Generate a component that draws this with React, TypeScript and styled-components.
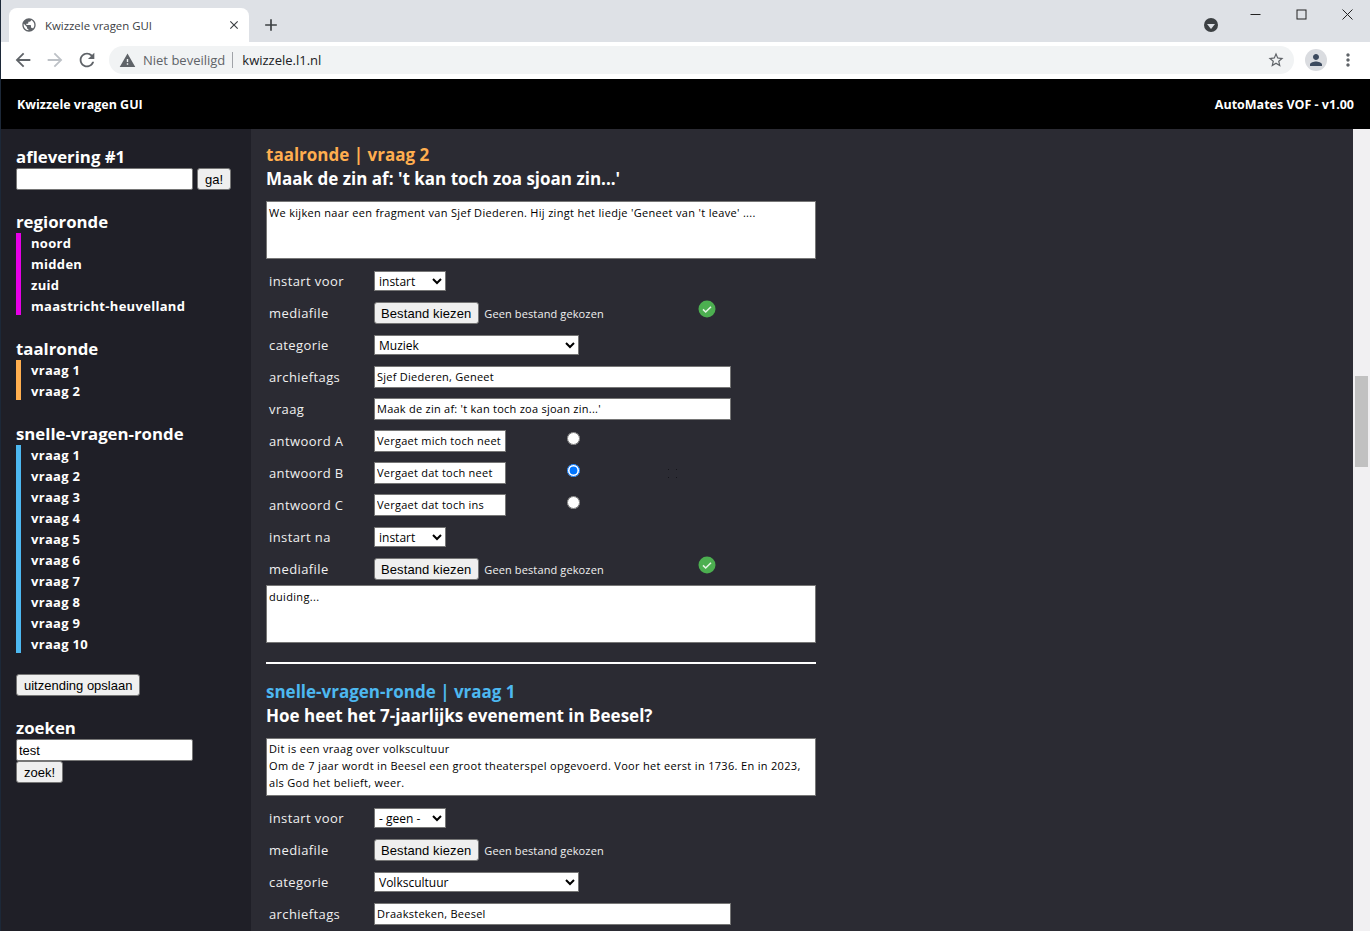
import { createGlobalStyle, styled } from "styled-components";
import {
  MdAdd,
  MdArrowBack,
  MdArrowForward,
  MdClose,
  MdMoreVert,
  MdPerson,
  MdPublic,
  MdRefresh,
  MdStarBorder,
  MdWarning,
} from "react-icons/md";

const SITE_FONT = `"Open Sans", "Noto Sans", sans-serif`;
const CTRL_FONT = `"Liberation Sans", Arial, sans-serif`;

const GlobalStyle = createGlobalStyle`
  html, body {
    margin: 0;
    padding: 0;
    height: 100%;
    overflow: hidden;
    background: #000;
  }
  * { box-sizing: border-box; }
`;

const Page = styled.div`
  position: relative;
  width: 1370px;
  height: 931px;
  display: flex;
  flex-direction: column;
  overflow: hidden;
  font-family: ${SITE_FONT};

  /* the window's own edge */
  &::after {
    content: "";
    position: absolute;
    top: 0;
    bottom: 0;
    left: 0;
    width: 1px;
    background: #1c2838;
  }
`;

const TabStrip = styled.div`
  height: 42px;
  flex: none;
  background: #dee1e6;
  display: flex;
  align-items: flex-end;
  padding-left: 9px;
  color: #3c4043;
`;

const Tab = styled.div`
  width: 240px;
  height: 34px;
  background: #fff;
  border-radius: 8px 8px 0 0;
  display: flex;
  align-items: center;
  padding: 0 8px 0 12px;
  font-size: 11.4px;
  color: #3c4043;

  span {
    flex: 1;
    margin-left: 8px;
  }
`;

const NewTab = styled.div`
  margin: 0 0 5px 12px;
  height: 24px;
  display: flex;
  align-items: center;
`;

const StripRight = styled.div`
  margin-left: auto;
  height: 42px;
  display: flex;
  align-items: flex-start;
`;

const MediaBadge = styled.div`
  width: 14px;
  height: 14px;
  margin: 18px 14px 0 0;
  border-radius: 50%;
  background: #3c4043;
  display: flex;
  align-items: center;
  justify-content: center;

  &::after {
    content: "";
    margin-top: 2px;
    border-left: 4px solid transparent;
    border-right: 4px solid transparent;
    border-top: 5px solid #dee1e6;
  }
`;

const WinButton = styled.div`
  width: 46px;
  height: 28px;
  display: flex;
  align-items: center;
  justify-content: center;
`;

const Toolbar = styled.div`
  height: 37px;
  flex: none;
  background: #fff;
  display: flex;
  align-items: center;
  padding: 0 0 1px 12px;
  color: #5f6368;
`;

const NavIcon = styled.div<{ $dim?: boolean }>`
  width: 32px;
  display: flex;
  color: ${(p) => (p.$dim ? "#bdc1c6" : "#5f6368")};
`;

const AddressBar = styled.div`
  width: 1185px;
  height: 28px;
  margin-left: 1px;
  background: #f1f3f4;
  border-radius: 14px;
  display: flex;
  align-items: center;
  padding: 0 9px 0 10px;
  font-size: 13px;
`;

const NotSecure = styled.span`
  margin-left: 7px;
  color: #5f6368;
  padding-right: 7px;
  border-right: 1px solid #a0a3a8;
  line-height: 16px;
`;

const Url = styled.span`
  margin-left: 9px;
  color: #202124;
  flex: 1;
`;

const Avatar = styled.div`
  width: 22px;
  height: 22px;
  margin-left: 11px;
  border-radius: 50%;
  background: #dadce0;
  color: #3c4a5e;
  display: flex;
  align-items: center;
  justify-content: center;
`;

const MenuDots = styled.div`
  margin-left: 11px;
  display: flex;
`;

const TopBar = styled.header`
  height: 50px;
  flex: none;
  background: #000;
  color: #fff;
  display: flex;
  align-items: center;
  justify-content: space-between;
  padding: 0 16px 0 17px;
  font-size: 12.5px;
  font-weight: 700;
`;

const Body = styled.div`
  flex: 1;
  min-height: 0;
  display: flex;
  overflow: hidden;
`;

const Sidebar = styled.aside`
  width: 251px;
  flex: none;
  background: #1f1f27;
  color: #fff;
  padding: 18px 0 0 16px;
`;

const SideBlock = styled.div<{ $gap: number }>`
  margin-bottom: ${(p) => p.$gap}px;
`;

const SideTitle = styled.h3`
  margin: 0;
  padding-bottom: 2px;
  font-size: 16.8px;
  line-height: 19px;
  font-weight: 700;
`;

const InlineForm = styled.div`
  display: flex;
  gap: 4px;
`;

const SideInput = styled.input`
  display: block;
  width: 177px;
  height: 22px;
  padding: 1px 2px;
  border: 1px solid #767676;
  border-radius: 2px;
  background: #fff;
  font: 13px ${CTRL_FONT};
  color: #000;
`;

const Button = styled.button`
  display: block;
  height: 22px;
  padding: 0 7px;
  border: 1px solid #767676;
  border-radius: 3px;
  background: #efefef;
  font: 13px ${CTRL_FONT};
  color: #000;
  white-space: nowrap;
`;

const FileButton = styled(Button)`
  padding: 0 7px 0 6px;
  letter-spacing: 0.1px;
`;

const RoundList = styled.ul<{ $color: string }>`
  list-style: none;
  margin: 0;
  padding: 0 0 0 10px;
  border-left: 5px solid ${(p) => p.$color};
`;

const RoundItem = styled.li`
  height: 19px;
  line-height: 20px;
  font-size: 13px;
  font-weight: 700;
  letter-spacing: 0.3px;

  & + & {
    margin-top: 2px;
  }
`;

const Main = styled.main`
  flex: 1;
  min-width: 0;
  background: #2b2b33;
  color: #fff;
  padding: 15px 0 0 15px;
`;

const Question = styled.section`
  width: 550px;
`;

const RoundHeading = styled.h2<{ $color: string }>`
  margin: 0;
  height: 23px;
  font-size: 17px;
  line-height: 22px;
  font-weight: 700;
  color: ${(p) => p.$color};
`;

const QuestionTitle = styled.h2`
  margin: 0 0 9px;
  height: 25px;
  font-size: 17px;
  line-height: 24px;
  font-weight: 700;
`;

const TextBox = styled.div<{ $top?: number }>`
  width: 550px;
  height: 58px;
  padding: ${(p) => p.$top ?? 2}px 2px 0;
  background: #fff;
  border: 1px solid #767676;
  color: #000;
  font-size: 11px;
  line-height: 17px;
  letter-spacing: 0.32px;
`;

const Rows = styled.div`
  padding-top: 6px;
`;

const Row = styled.div`
  height: 32px;
  display: flex;
  align-items: center;
  padding-left: 3px;
`;

const RowLabel = styled.label`
  width: 105px;
  flex: none;
  font-size: 13px;
  letter-spacing: 0.4px;
  color: #f0f0f0;
`;

const Select = styled.select<{ $w: number }>`
  width: ${(p) => p.$w}px;
  height: 20px;
  padding: 0;
  border: 1px solid #767676;
  border-radius: 0;
  background-color: #fff;
  font: 12px ${SITE_FONT};
  color: #000;
`;

const TextInput = styled.input<{ $w: number }>`
  width: ${(p) => p.$w}px;
  height: 22px;
  padding: 0 2px 2px;
  border: 1px solid #767676;
  background: #fff;
  color: #000;
  font: 11px ${SITE_FONT};
  letter-spacing: 0.25px;
`;

const FileName = styled.span`
  margin-left: 5px;
  font-size: 11px;
  letter-spacing: 0.12px;
  color: #f0f0f0;
`;

const Radio = styled.input`
  width: 13px;
  height: 13px;
  margin: 0 0 5px 61px;
`;

const CheckMark = styled.svg`
  flex: none;
  margin-bottom: 8px;
`;

const CheckSlot = styled.div`
  margin-left: 94px;
  display: flex;
`;

const DragDots = styled.svg`
  margin-left: 87px;
`;

const Divider = styled.hr`
  width: 550px;
  height: 2px;
  margin: 19px 0 17px;
  border: 0;
  background: #fff;
`;

const ScrollBar = styled.div`
  width: 17px;
  flex: none;
  background: #f1f0f2;
  padding-top: 247px;
  display: flex;
  justify-content: center;
`;

const ScrollThumb = styled.div`
  width: 13px;
  height: 91px;
  background: #c1c1c1;
`;

const regio = ["noord", "midden", "zuid", "maastricht-heuvelland"];
const quick = Array.from({ length: 10 }, (_, i) => `vraag ${i + 1}`);

const Check = () => (
  <CheckMark width="18" height="18" viewBox="0 0 18 18">
    <circle cx="9" cy="9" r="8.5" fill="#4caf50" />
    <path d="M5 9.4l2.7 2.6L13 6.8" fill="none" stroke="#e4f4e4" strokeWidth="1.6" />
  </CheckMark>
);

const FilePicker = () => (
  <>
    <FileButton>Bestand kiezen</FileButton>
    <FileName>Geen bestand gekozen</FileName>
  </>
);

const App = () => {
  return (
    <Page>
      <GlobalStyle />
      <TabStrip>
        <Tab>
          <MdPublic size={16} color="#5f6368" />
          <span>Kwizzele vragen GUI</span>
          <MdClose size={14} color="#3c4043" />
        </Tab>
        <NewTab>
          <MdAdd size={20} color="#3c4043" />
        </NewTab>
        <StripRight>
          <MediaBadge />
          <WinButton>
            <svg width="11" height="11" viewBox="0 0 11 11">
              <path d="M0.5 5.5h10" stroke="#222" />
            </svg>
          </WinButton>
          <WinButton>
            <svg width="11" height="11" viewBox="0 0 11 11">
              <rect x="1" y="1" width="9" height="9" fill="none" stroke="#222" />
            </svg>
          </WinButton>
          <WinButton>
            <svg width="11" height="11" viewBox="0 0 11 11">
              <path d="M0.5 0.5l10 10M10.5 0.5l-10 10" stroke="#222" />
            </svg>
          </WinButton>
        </StripRight>
      </TabStrip>
      <Toolbar>
        <NavIcon>
          <MdArrowBack size={22} />
        </NavIcon>
        <NavIcon $dim>
          <MdArrowForward size={22} />
        </NavIcon>
        <NavIcon>
          <MdRefresh size={22} />
        </NavIcon>
        <AddressBar>
          <MdWarning size={17} color="#5f6368" />
          <NotSecure>Niet beveiligd</NotSecure>
          <Url>kwizzele.l1.nl</Url>
          <MdStarBorder size={18} color="#5f6368" />
        </AddressBar>
        <Avatar>
          <MdPerson size={18} />
        </Avatar>
        <MenuDots>
          <MdMoreVert size={20} />
        </MenuDots>
      </Toolbar>
      <TopBar>
        <span>Kwizzele vragen GUI</span>
        <span>AutoMates VOF - v1.00</span>
      </TopBar>
      <Body>
        <Sidebar>
          <SideBlock $gap={22}>
            <SideTitle>aflevering #1</SideTitle>
            <InlineForm>
              <SideInput />
              <Button>ga!</Button>
            </InlineForm>
          </SideBlock>
          <SideBlock $gap={24}>
            <SideTitle>regioronde</SideTitle>
            <RoundList $color="#e600e6">
              {regio.map((r) => (
                <RoundItem key={r}>{r}</RoundItem>
              ))}
            </RoundList>
          </SideBlock>
          <SideBlock $gap={24}>
            <SideTitle>taalronde</SideTitle>
            <RoundList $color="#ffae4f">
              <RoundItem>vraag 1</RoundItem>
              <RoundItem>vraag 2</RoundItem>
            </RoundList>
          </SideBlock>
          <SideBlock $gap={21}>
            <SideTitle>snelle-vragen-ronde</SideTitle>
            <RoundList $color="#4db8f0">
              {quick.map((q) => (
                <RoundItem key={q}>{q}</RoundItem>
              ))}
            </RoundList>
          </SideBlock>
          <SideBlock $gap={22}>
            <Button>uitzending opslaan</Button>
          </SideBlock>
          <SideTitle>zoeken</SideTitle>
          <SideInput defaultValue="test" />
          <Button>zoek!</Button>
        </Sidebar>
        <Main>
          <Question>
            <RoundHeading $color="#ffae4f">taalronde | vraag 2</RoundHeading>
            <QuestionTitle>Maak de zin af: 't kan toch zoa sjoan zin...'</QuestionTitle>
            <TextBox>
              We kijken naar een fragment van Sjef Diederen. Hij zingt het liedje 'Geneet van 't leave' ....
            </TextBox>
            <Rows>
              <Row>
                <RowLabel>instart voor</RowLabel>
                <Select $w={72} defaultValue="instart">
                  <option>instart</option>
                </Select>
              </Row>
              <Row>
                <RowLabel>mediafile</RowLabel>
                <FilePicker />
                <CheckSlot>
                  <Check />
                </CheckSlot>
              </Row>
              <Row>
                <RowLabel>categorie</RowLabel>
                <Select $w={205} defaultValue="Muziek">
                  <option>Muziek</option>
                </Select>
              </Row>
              <Row>
                <RowLabel>archieftags</RowLabel>
                <TextInput $w={357} defaultValue="Sjef Diederen, Geneet" />
              </Row>
              <Row>
                <RowLabel>vraag</RowLabel>
                <TextInput $w={357} defaultValue="Maak de zin af: 't kan toch zoa sjoan zin...'" />
              </Row>
              <Row>
                <RowLabel>antwoord A</RowLabel>
                <TextInput $w={132} defaultValue="Vergaet mich toch neet" />
                <Radio type="radio" name="a1" />
              </Row>
              <Row>
                <RowLabel>antwoord B</RowLabel>
                <TextInput $w={132} defaultValue="Vergaet dat toch neet" />
                <Radio type="radio" name="a1" defaultChecked />
                <DragDots width="11" height="11" viewBox="0 0 11 11">
                  <path d="M1 1h1v1H1zM9 1h1v1H9zM1 9h1v1H1zM9 9h1v1H9z" fill="#14141a" />
                </DragDots>
              </Row>
              <Row>
                <RowLabel>antwoord C</RowLabel>
                <TextInput $w={132} defaultValue="Vergaet dat toch ins" />
                <Radio type="radio" name="a1" />
              </Row>
              <Row>
                <RowLabel>instart na</RowLabel>
                <Select $w={72} defaultValue="instart">
                  <option>instart</option>
                </Select>
              </Row>
              <Row>
                <RowLabel>mediafile</RowLabel>
                <FilePicker />
                <CheckSlot>
                  <Check />
                </CheckSlot>
              </Row>
            </Rows>
            <TextBox>duiding...</TextBox>
            <Divider />
            <RoundHeading $color="#4db8f0">snelle-vragen-ronde | vraag 1</RoundHeading>
            <QuestionTitle>Hoe heet het 7-jaarlijks evenement in Beesel?</QuestionTitle>
            <TextBox $top={1}>
              Dit is een vraag over volkscultuur
              <br />
              Om de 7 jaar wordt in Beesel een groot theaterspel opgevoerd. Voor het eerst in 1736. En in 2023,
              <br />
              als God het belieft, weer.
            </TextBox>
            <Rows>
              <Row>
                <RowLabel>instart voor</RowLabel>
                <Select $w={72} defaultValue="- geen -">
                  <option>- geen -</option>
                </Select>
              </Row>
              <Row>
                <RowLabel>mediafile</RowLabel>
                <FilePicker />
              </Row>
              <Row>
                <RowLabel>categorie</RowLabel>
                <Select $w={205} defaultValue="Volkscultuur">
                  <option>Volkscultuur</option>
                </Select>
              </Row>
              <Row>
                <RowLabel>archieftags</RowLabel>
                <TextInput $w={357} defaultValue="Draaksteken, Beesel" />
              </Row>
            </Rows>
          </Question>
        </Main>
        <ScrollBar>
          <ScrollThumb />
        </ScrollBar>
      </Body>
    </Page>
  );
};

export default App;
